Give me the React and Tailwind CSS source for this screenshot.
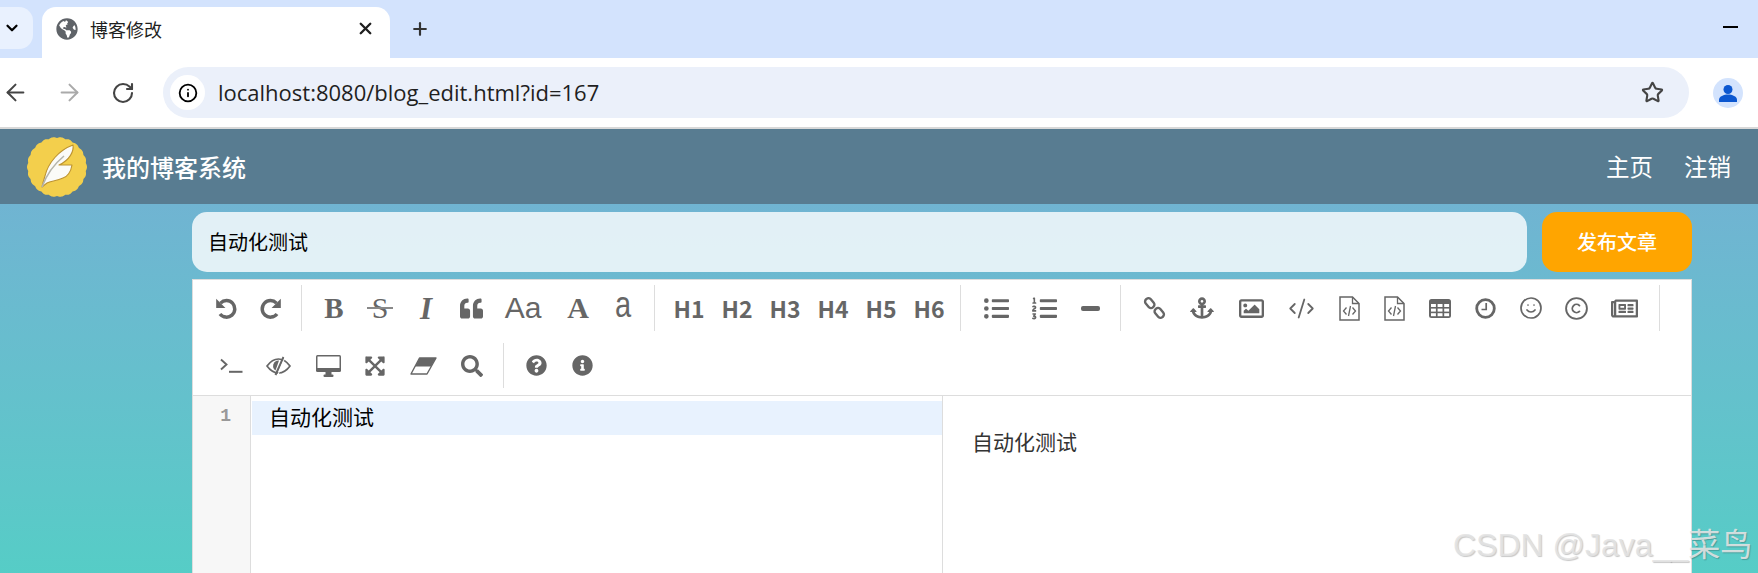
import React from "react";
import { ArrowLeft, ArrowRight, RotateCw, Info, Star, ChevronDown, X, Plus, CodeXml, Smile, Copyright } from "lucide-react";
import {
  FaQuoteLeft, FaListUl, FaListOl, FaAnchor, FaRegImage, FaRegNewspaper,
  FaExpandArrowsAlt, FaSearch, FaQuestionCircle, FaInfoCircle, FaGlobeAmericas,
} from "react-icons/fa";

const cjk = "font-['Noto_Sans_CJK_SC','Noto_Sans',sans-serif]";

function Btn({ w, children }) {
  return <div className={`flex h-full items-center justify-center text-[#666] ${w}`}>{children}</div>;
}

function Sep({ className }) {
  return <div className={`h-full w-px shrink-0 bg-[#ddd] ${className}`} />;
}

function Logo() {
  const pts = [];
  for (let i = 0; i < 240; i++) {
    const a = (i / 240) * Math.PI * 2;
    const r = 29 + 1 * Math.abs(Math.cos(a * 11));
    pts.push(`${30 + r * Math.cos(a)},${30 + r * Math.sin(a)}`);
  }
  return (
    <svg width="60" height="60" viewBox="0 0 60 60" className="shrink-0">
      <polygon points={pts.join(" ")} fill="#f3cf4c" />
      <path
        d="M15 50C16 45 17 42 18 39C21 26 32 13 46 8C47 14 43 23 32 28L45 28C44 35 40 40 36 41C30 44 24 44 20 46L15 50Z"
        fill="#fbfbf8"
        stroke="#bd9330"
        strokeWidth="1.1"
        strokeLinejoin="round"
      />
      <path d="M15 50C19 39 26 28 37 19" stroke="#b5b5ad" strokeWidth="1.6" fill="none" />
    </svg>
  );
}

function Avatar() {
  return (
    <div className="flex h-[30px] w-[30px] items-center justify-center rounded-full bg-[#d3e3fd]">
      <svg width="20" height="20" viewBox="0 0 20 20">
        <circle cx="10" cy="6.5" r="4.5" fill="#0b57d0" />
        <path d="M1 19v-2.5C1 13.5 6 11.5 10 11.5s9 2 9 5V19Z" fill="#0b57d0" />
      </svg>
    </div>
  );
}

function UndoIcon({ className }) {
  return (
    <svg width="24" height="24" viewBox="0 0 22 22" className={className}>
      <path d="M6 6.5A7.6 7.6 0 1 1 5.5 16.5" fill="none" stroke="currentColor" strokeWidth="3.2" />
      <path d="M2 2.5V11H10.5Z" fill="currentColor" />
    </svg>
  );
}

function LinkIcon() {
  return (
    <svg width="23" height="24" viewBox="0 0 23 24" fill="none" stroke="currentColor" strokeWidth="2.4">
      <rect x="1.5" y="3.8" width="10.5" height="6.6" rx="3" transform="rotate(50 6.75 7.1)" />
      <rect x="11" y="13.6" width="10.5" height="6.6" rx="3" transform="rotate(50 16.25 16.9)" />
    </svg>
  );
}

function FileCodeIcon() {
  return (
    <svg width="21" height="25" viewBox="0 0 21 25" fill="none" stroke="currentColor">
      <path d="M1 1H13.5L20 7.5V24H1Z" strokeWidth="1.5" />
      <path d="M13.5 1V7.5H20" strokeWidth="1.3" />
      <path d="M7.5 11.5L4.5 15L7.5 18.5M13.5 11.5L16.5 15L13.5 18.5M11.5 10L9.5 20" strokeWidth="1.3" />
    </svg>
  );
}

function TableIcon() {
  const cells = [];
  for (const y of [5, 9.6, 14.2]) for (const x of [2, 8.6, 15.2]) cells.push(<rect key={`${x}-${y}`} x={x} y={y} width="4.9" height="3" fill="#fff" />);
  return (
    <svg width="22" height="19" viewBox="0 0 22 19">
      <rect width="22" height="19" rx="2.5" fill="currentColor" />
      {cells}
    </svg>
  );
}

function ClockIcon() {
  return (
    <svg width="21" height="21" viewBox="0 0 21 21" fill="none" stroke="currentColor">
      <circle cx="10.5" cy="10.5" r="8.8" strokeWidth="2.8" />
      <path d="M11.2 5V11.5H6.5" strokeWidth="1.7" />
    </svg>
  );
}

function TerminalIcon() {
  return (
    <svg width="23" height="15" viewBox="0 0 23 15" fill="none" stroke="currentColor">
      <path d="M1 1.5L6.5 6.5L1 11.5" strokeWidth="1.9" />
      <path d="M9 13.8H22.5" strokeWidth="2" />
    </svg>
  );
}

function EyeSlashIcon() {
  return (
    <svg width="25" height="20" viewBox="0 0 25 20" fill="none" stroke="currentColor">
      <path d="M1 10C5 4.5 9 3 12.5 3S20 4.5 24 10C20 15.5 16 17 12.5 17S5 15.5 1 10Z" strokeWidth="1.7" />
      <path d="M13 4.5A5.5 5.5 0 0 0 9.5 14.5Z" fill="currentColor" stroke="none" />
      <path d="M17.5 1L9.5 19" strokeWidth="2" />
      <path d="M19.5 0L11.5 20" stroke="#fff" strokeWidth="1" />
    </svg>
  );
}

function DesktopIcon() {
  return (
    <svg width="25" height="22" viewBox="0 0 25 22">
      <rect width="25" height="17" rx="1.5" fill="currentColor" />
      <rect x="1.5" y="1.5" width="22" height="11.5" fill="#fff" />
      <rect x="9.5" y="17" width="6" height="3" fill="currentColor" />
      <rect x="7.5" y="19.5" width="10" height="2.5" rx="1" fill="currentColor" />
    </svg>
  );
}

function EraserIcon() {
  return (
    <svg width="27" height="18" viewBox="0 0 27 18">
      <path d="M9.5 1H26L17 17H1Z" fill="none" stroke="currentColor" strokeWidth="1.4" strokeLinejoin="round" />
      <path d="M9.5 1H26L21 9.5H5Z" fill="currentColor" />
    </svg>
  );
}

export default function App() {
  return (
    <div className={`flex h-[573px] w-full flex-col overflow-hidden bg-white ${cjk}`}>
      {/* tab strip */}
      <div className="flex h-[58px] shrink-0 items-end bg-[#d3e3fd]">
        <div className="mb-[9px] flex h-[42px] w-[33px] items-center justify-start rounded-r-[14px] bg-[#e9f1fe] pl-[3px] text-black">
          <ChevronDown size={18} strokeWidth={3} />
        </div>
        <div className="ml-[9px] flex h-[51px] w-[348px] items-center rounded-t-[14px] bg-white pb-[8px] pl-[14px]">
          <FaGlobeAmericas size={22} className="text-[#5f6368]" />
          <span className="ml-[12px] flex-1 text-[18px] leading-none text-[#1f1f1f]">博客修改</span>
          <X size={19} strokeWidth={3} className="mr-[15px] text-[#1f1f1f]" />
        </div>
        <div className="mb-[19px] ml-[20px] text-[#333]">
          <Plus size={20} strokeWidth={2.6} />
        </div>
        <div className="mb-[30px] ml-auto mr-[20px] h-[2px] w-[15px] bg-black" />
      </div>
      {/* address bar */}
      <div className="flex h-[69px] shrink-0 items-center bg-white">
        <div className="flex w-[163px] items-center pl-[2px]">
          <ArrowLeft size={27} strokeWidth={1.8} className="text-[#444]" />
          <ArrowRight size={27} strokeWidth={1.8} className="ml-[27px] text-[#aaa]" />
          <RotateCw size={24} strokeWidth={2.1} className="ml-[28px] text-[#444]" />
        </div>
        <div className="flex h-[51px] w-[1526px] items-center rounded-full bg-[#ebf0fa] pl-[7px]">
          <div className="flex h-[35px] w-[35px] items-center justify-center rounded-full bg-white">
            <Info size={20} strokeWidth={2.2} className="text-black" />
          </div>
          <span className="mb-[2px] ml-[13px] flex-1 font-['Open_Sans',sans-serif] text-[22px] leading-none text-[#1f1f1f]">
            localhost:8080/blog_edit.html?id=167
          </span>
          <Star size={23} strokeWidth={2.2} className="mr-[25px] text-[#444]" />
        </div>
        <div className="ml-[24px]">
          <Avatar />
        </div>
      </div>
      <div className="h-[2px] shrink-0 bg-[#d8d8d8]" />
      {/* site header */}
      <header className="flex h-[75px] shrink-0 items-center bg-[#587c91] pl-[27px] pr-[27px] text-white">
        <Logo />
        <span className="ml-[15px] flex-1 text-[24px] font-medium">我的博客系统</span>
        <span className="text-[23.5px]">主页</span>
        <span className="ml-[31px] text-[23.5px]">注销</span>
      </header>
      {/* main */}
      <main className="flex-1 bg-gradient-to-b from-[#70b4d2] to-[#55cdc6] pl-[192px] pt-[8px]">
        <div className="flex w-[1500px] gap-[15px]">
          <div className="flex h-[60px] w-[1335px] items-center rounded-[15px] bg-white/80 pl-[16px] text-[20px] text-black">
            自动化测试
          </div>
          <div className="flex h-[60px] w-[150px] items-center justify-center rounded-[15px] bg-[#ffa500] text-[20px] font-medium text-white">
            发布文章
          </div>
        </div>
        <div className="mt-[7px] flex h-[300px] w-[1500px] flex-col border border-[#ddd] bg-white">
          <div className="shrink-0 border-b border-[#ddd] pl-[10px]">
            <div className="mt-[5px] flex h-[46px] items-stretch">
              <Btn w="w-[45px]"><UndoIcon /></Btn>
              <Btn w="w-[45px]"><UndoIcon className="-scale-x-100" /></Btn>
              <Sep className="ml-[8px]" />
              <Btn w="ml-[9px] w-[46px]"><span className="font-['Liberation_Serif',serif] text-[29px] font-bold leading-none">B</span></Btn>
              <Btn w="w-[46px]">
                <span className="relative font-['Liberation_Serif',serif] text-[30px] leading-none">
                  S
                  <span className="absolute left-[-5px] right-[-5px] top-[14px] h-[2px] bg-[#888]" />
                </span>
              </Btn>
              <Btn w="w-[46px]"><span className="font-['Liberation_Serif',serif] text-[31px] font-bold italic leading-none">I</span></Btn>
              <Btn w="w-[45px]"><FaQuoteLeft size={23} /></Btn>
              <Btn w="w-[58px]"><span className="font-['Liberation_Sans',sans-serif] text-[30px] leading-none">Aa</span></Btn>
              <Btn w="w-[52px]"><span className="font-['Liberation_Serif',serif] text-[30px] font-bold leading-none">A</span></Btn>
              <Btn w="w-[38px]"><span className="mb-[6px] inline-block scale-y-125 font-['Liberation_Sans',sans-serif] text-[29px] leading-none">a</span></Btn>
              <Sep className="ml-[12px]" />
              <Btn w="ml-[10px] w-[48px]"><span className="text-[23px] font-bold">H1</span></Btn>
              <Btn w="w-[48px]"><span className="text-[23px] font-bold">H2</span></Btn>
              <Btn w="w-[48px]"><span className="text-[23px] font-bold">H3</span></Btn>
              <Btn w="w-[48px]"><span className="text-[23px] font-bold">H4</span></Btn>
              <Btn w="w-[48px]"><span className="text-[23px] font-bold">H5</span></Btn>
              <Btn w="w-[48px]"><span className="text-[23px] font-bold">H6</span></Btn>
              <Sep className="ml-[7px]" />
              <Btn w="ml-[11px] w-[48px]"><FaListUl size={25} /></Btn>
              <Btn w="w-[48px]"><FaListOl size={25} /></Btn>
              <Btn w="w-[44px]"><div className="h-[5px] w-[19px] rounded-[2px] bg-[#666]" /></Btn>
              <Sep className="ml-[8px]" />
              <Btn w="ml-[9px] w-[48px]"><LinkIcon /></Btn>
              <Btn w="w-[48px]"><FaAnchor size={24} /></Btn>
              <Btn w="w-[50px]"><FaRegImage size={25} /></Btn>
              <Btn w="w-[50px]"><CodeXml size={27} strokeWidth={1.6} /></Btn>
              <Btn w="w-[46px]"><FileCodeIcon /></Btn>
              <Btn w="w-[45px]"><FileCodeIcon /></Btn>
              <Btn w="w-[46px]"><TableIcon /></Btn>
              <Btn w="w-[45px]"><ClockIcon /></Btn>
              <Btn w="w-[46px]"><Smile size={24} strokeWidth={1.7} /></Btn>
              <Btn w="w-[45px]"><Copyright size={25} strokeWidth={1.8} /></Btn>
              <Btn w="w-[50px]"><FaRegNewspaper size={27} /></Btn>
              <Sep className="ml-[10px]" />
            </div>
            <div className="mb-[7px] mt-[12px] flex h-[45px] items-stretch">
              <Btn w="w-[56px]"><TerminalIcon /></Btn>
              <Btn w="w-[38px]"><EyeSlashIcon /></Btn>
              <Btn w="w-[62px]"><DesktopIcon /></Btn>
              <Btn w="w-[32px]"><FaExpandArrowsAlt size={22} /></Btn>
              <Btn w="w-[64px]"><EraserIcon /></Btn>
              <Btn w="w-[34px]"><FaSearch size={22} /></Btn>
              <Sep className="ml-[14px]" />
              <Btn w="w-[64px]"><FaQuestionCircle size={21} /></Btn>
              <Btn w="w-[28px]"><FaInfoCircle size={21} /></Btn>
            </div>
          </div>
          <div className="flex flex-1">
            <div className="flex w-[58px] shrink-0 justify-end border-r border-[#ddd] bg-[#f7f7f7] pr-[19px] pt-[5px] font-['Liberation_Mono',monospace] text-[18px] font-bold leading-[30px] text-[#999]">
              1
            </div>
            <div className="w-[692px] shrink-0 border-r border-[#ddd] pl-px pt-[5px]">
              <div className="flex h-[34px] items-center bg-[#e8f2fe] pb-[3px] pl-[17px] text-[21px] text-black">自动化测试</div>
            </div>
            <div className="flex-1 pl-[29px] pt-[28px] text-[21px] leading-[34px] text-[#333]">自动化测试</div>
          </div>
        </div>
      </main>
      <div className="pointer-events-none absolute left-[1453px] top-[523px] whitespace-nowrap font-['Liberation_Sans','Noto_Sans_CJK_SC',sans-serif] text-[32px] leading-[44px] text-[#e4e4e4]/90 [text-shadow:1px_1px_1px_rgba(0,0,0,0.22)]">
        CSDN @Java__菜鸟
      </div>
    </div>
  );
}
